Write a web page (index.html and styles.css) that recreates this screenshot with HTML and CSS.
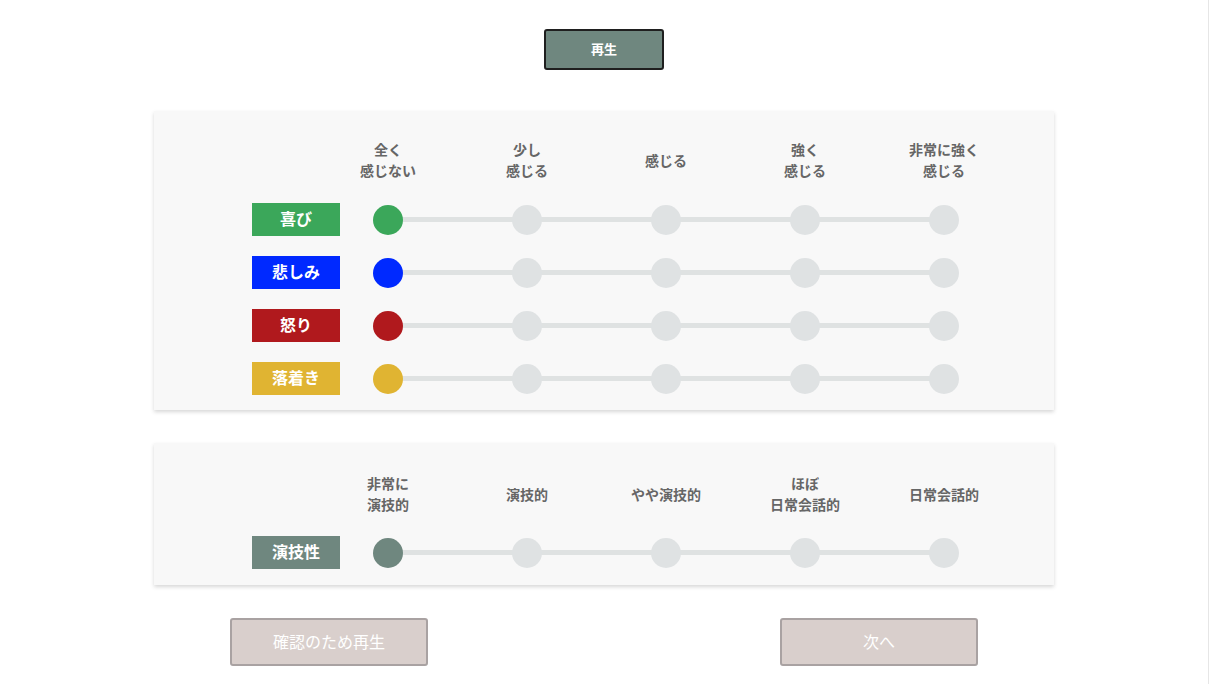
FILE: index.html
```html
<!DOCTYPE html>
<html lang="ja">
<head>
<meta charset="utf-8">
<title>評価</title>
<link rel="stylesheet" href="styles.css">
</head>
<body>
<div class="page">
  <div class="top">
    <button class="play">再生</button>
  </div>

  <section class="panel panel-emotion">
    <div class="head-row">
      <div class="head-spacer"></div>
      <div class="heads">
        <div class="head"><span>全く<br>感じない</span></div>
        <div class="head"><span>少し<br>感じる</span></div>
        <div class="head"><span>感じる</span></div>
        <div class="head"><span>強く<br>感じる</span></div>
        <div class="head"><span>非常に強く<br>感じる</span></div>
      </div>
    </div>
    <div class="rows">
      <div class="row">
        <div class="label joy">喜び</div>
        <div class="track">
          <span class="dot on joy"></span><span class="dot"></span><span class="dot"></span><span class="dot"></span><span class="dot"></span>
        </div>
      </div>
      <div class="row">
        <div class="label sad">悲しみ</div>
        <div class="track">
          <span class="dot on sad"></span><span class="dot"></span><span class="dot"></span><span class="dot"></span><span class="dot"></span>
        </div>
      </div>
      <div class="row">
        <div class="label angry">怒り</div>
        <div class="track">
          <span class="dot on angry"></span><span class="dot"></span><span class="dot"></span><span class="dot"></span><span class="dot"></span>
        </div>
      </div>
      <div class="row">
        <div class="label calm">落着き</div>
        <div class="track">
          <span class="dot on calm"></span><span class="dot"></span><span class="dot"></span><span class="dot"></span><span class="dot"></span>
        </div>
      </div>
    </div>
  </section>

  <section class="panel panel-acting">
    <div class="head-row">
      <div class="head-spacer"></div>
      <div class="heads">
        <div class="head"><span>非常に<br>演技的</span></div>
        <div class="head"><span>演技的</span></div>
        <div class="head"><span>やや演技的</span></div>
        <div class="head"><span>ほぼ<br>日常会話的</span></div>
        <div class="head"><span>日常会話的</span></div>
      </div>
    </div>
    <div class="rows">
      <div class="row">
        <div class="label acting">演技性</div>
        <div class="track">
          <span class="dot on acting"></span><span class="dot"></span><span class="dot"></span><span class="dot"></span><span class="dot"></span>
        </div>
      </div>
    </div>
  </section>

  <div class="actions">
    <button class="btn-sub">確認のため再生</button>
    <button class="btn-sub">次へ</button>
  </div>
</div>
</body>
</html>
```

FILE: styles.css
```css
* { box-sizing: border-box; }

html, body {
  margin: 0;
  padding: 0;
  background: #ffffff;
}

body {
  font-family: "Noto Sans CJK JP", "Noto Sans", sans-serif;
  width: 1210px;
  height: 684px;
  overflow: hidden;
}

.page {
  width: 1209px;
  height: 684px;
  border-right: 1px solid #e6e6e6;
  display: flex;
  flex-direction: column;
  align-items: center;
  padding-top: 29px;
}

.top {
  display: flex;
  justify-content: center;
}

.play {
  width: 120px;
  height: 41px;
  background: #6f877f;
  border: 2px solid #1f1f1f;
  border-radius: 3px;
  color: #ffffff;
  font-family: inherit;
  font-weight: 700;
  font-size: 13px;
  padding: 0 0 2px;
}

.panel {
  width: 900px;
  background: #f8f8f8;
  box-shadow: 0 2px 4px rgba(0, 0, 0, 0.16);
  padding-left: 98px;
}

.panel-emotion {
  margin-top: 41px;
  padding-top: 28px;
  padding-bottom: 15px;
}

.panel-emotion .rows {
  margin-top: 22px;
}

.panel-acting {
  margin-top: 33px;
  padding-top: 30px;
  padding-bottom: 16px;
}

.head-row {
  display: flex;
}

.head-spacer {
  width: 121px;
  flex: none;
}

.heads {
  width: 586px;
  display: flex;
  justify-content: space-between;
  align-items: center;
  height: 42px;
}

.head {
  width: 30px;
  display: flex;
  justify-content: center;
}

.head span {
  white-space: nowrap;
  text-align: center;
  font-size: 14px;
  font-weight: 700;
  line-height: 21px;
  color: #666666;
}

.rows {
  display: flex;
  flex-direction: column;
  gap: 20px;
  margin-top: 21px;
}

.row {
  display: flex;
  align-items: center;
  height: 33px;
}

.label {
  width: 88px;
  height: 33px;
  margin-right: 33px;
  display: flex;
  align-items: center;
  justify-content: center;
  color: #ffffff;
  font-weight: 700;
  font-size: 16px;
  padding-bottom: 3px;
}

.label.joy { background: #3ba75a; }
.label.sad { background: #0029ff; }
.label.angry { background: #b0191d; }
.label.calm { background: #e0b432; }
.label.acting { background: #6f877f; }

.track {
  width: 586px;
  display: flex;
  justify-content: space-between;
  align-items: center;
  background: linear-gradient(#dfe2e2, #dfe2e2) center / calc(100% - 30px) 5px no-repeat;
}

.dot {
  width: 30px;
  height: 30px;
  border-radius: 50%;
  background: #dfe2e3;
}

.dot.joy { background: #3ba75a; }
.dot.sad { background: #0029ff; }
.dot.angry { background: #b0191d; }
.dot.calm { background: #e0b432; }
.dot.acting { background: #6f877f; }

.actions {
  width: 900px;
  margin-top: 33px;
  padding: 0 76px;
  display: flex;
  justify-content: space-between;
}

.btn-sub {
  width: 198px;
  height: 48px;
  background: #d9cfcc;
  border: 2px solid #a9a2a2;
  border-radius: 3px;
  color: #ffffff;
  font-family: inherit;
  font-size: 16px;
  font-weight: 400;
  padding: 0 0 2px;
}
```
